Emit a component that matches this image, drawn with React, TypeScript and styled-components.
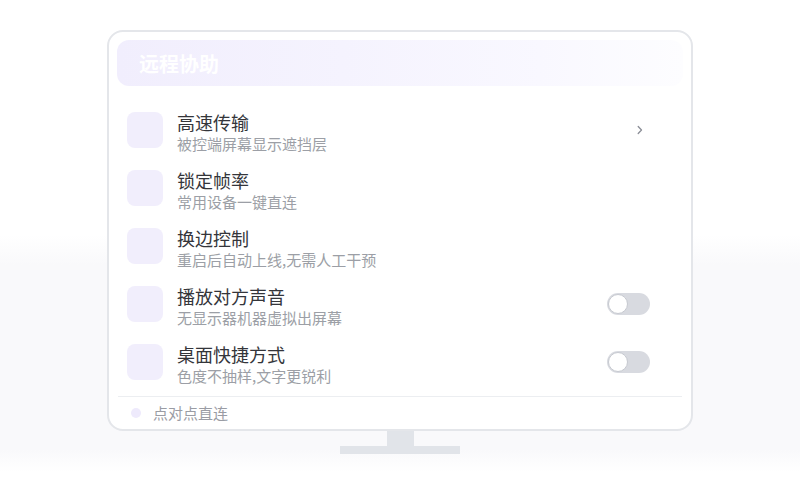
import React from "react";
import styled, { createGlobalStyle } from "styled-components";

const Global = createGlobalStyle`
  html, body { margin: 0; padding: 0; }
  body {
    width: 800px;
    height: 500px;
    overflow: hidden;
    font-family: "Noto Sans CJK SC", "Noto Sans", sans-serif;
    background: linear-gradient(to bottom, #ffffff 0px, #ffffff 235px, #f9f9fb 265px, #f9f9fb 450px, #ffffff 472px);
  }
`;

const Page = styled.div`
  width: 800px;
  height: 500px;
  display: flex;
  flex-direction: column;
  align-items: center;
  padding-top: 30px;
  box-sizing: border-box;
`;

const Screen = styled.div`
  width: 586px;
  height: 401px;
  box-sizing: border-box;
  border: 2px solid #e4e6ea;
  border-radius: 16px;
  background: #ffffff;
  padding: 8px 8px 0 8px;
  display: flex;
  flex-direction: column;
`;

const Header = styled.div`
  height: 46px;
  border-radius: 12px;
  background: linear-gradient(to right, #f1eefd 0%, #f5f3fe 40%, #f9f8ff 75%, #fdfdff 100%);
  display: flex;
  align-items: center;
  padding-left: 22px;
  font-size: 20px;
  font-weight: 700;
  color: #ffffff;
`;

const List = styled.div`
  display: flex;
  flex-direction: column;
  gap: 15px;
  padding: 25px 33px 10px 10px;
`;

const Row = styled.div`
  display: flex;
  align-items: flex-start;
  gap: 14px;
  height: 43px;
`;

const IconBox = styled.div`
  width: 36px;
  height: 36px;
  margin-top: 1px;
  border-radius: 8px;
  background: #f1eefc;
  flex-shrink: 0;
`;

const Texts = styled.div`
  flex: 1;
  display: flex;
  flex-direction: column;
`;

const Title = styled.div`
  font-size: 18px;
  line-height: 22px;
  color: #34353a;
`;

const Sub = styled.div`
  font-size: 15px;
  line-height: 21px;
  color: #9c9fa6;
`;

const Trailing = styled.div`
  width: 43px;
  height: 36px;
  margin-top: 1px;
  display: flex;
  align-items: center;
  justify-content: flex-end;
`;

const Chevron = styled.svg`
  margin-right: 7px;
`;

const Toggle = styled.div`
  width: 43px;
  height: 22px;
  border-radius: 11px;
  background: #d8dae0;
  position: relative;
`;

const Knob = styled.div`
  position: absolute;
  left: 1px;
  top: 1px;
  width: 20px;
  height: 20px;
  box-sizing: border-box;
  border-radius: 50%;
  background: #ffffff;
  border: 1px solid #c6c9d0;
`;

const Divider = styled.div`
  height: 1px;
  background: #eceef1;
  margin: 0 1px 0 1px;
`;

const Footer = styled.div`
  display: flex;
  align-items: center;
  gap: 12px;
  padding: 6px 0 0 14px;
  height: 20px;
  font-size: 15px;
  line-height: 20px;
  color: #9a9ca4;
`;

const Dot = styled.div`
  width: 10px;
  height: 10px;
  border-radius: 50%;
  background: #eeeafc;
`;

const Neck = styled.div`
  width: 27px;
  height: 15px;
  background: #e1e4e9;
  margin-left: 1px;
`;

const Base = styled.div`
  width: 120px;
  height: 8px;
  background: #e1e4e9;
`;

type Item = { title: string; sub: string; trail?: "chevron" | "toggle" };

const items: Item[] = [
  { title: "高速传输", sub: "被控端屏幕显示遮挡层", trail: "chevron" },
  { title: "锁定帧率", sub: "常用设备一键直连" },
  { title: "换边控制", sub: "重启后自动上线,无需人工干预" },
  { title: "播放对方声音", sub: "无显示器机器虚拟出屏幕", trail: "toggle" },
  { title: "桌面快捷方式", sub: "色度不抽样,文字更锐利", trail: "toggle" },
];

export default function App() {
  return (
    <>
      <Global />
      <Page>
        <Screen>
          <Header>远程协助</Header>
          <List>
            {items.map((it) => (
              <Row key={it.title}>
                <IconBox />
                <Texts>
                  <Title>{it.title}</Title>
                  <Sub>{it.sub}</Sub>
                </Texts>
                <Trailing>
                  {it.trail === "chevron" && (
                    <Chevron width="6" height="10" viewBox="0 0 6 10">
                      <polyline
                        points="1.2,1.5 4.5,5 1.2,8.5"
                        fill="none"
                        stroke="#8b8e97"
                        strokeWidth="1.3"
                        strokeLinecap="round"
                        strokeLinejoin="round"
                      />
                    </Chevron>
                  )}
                  {it.trail === "toggle" && (
                    <Toggle>
                      <Knob />
                    </Toggle>
                  )}
                </Trailing>
              </Row>
            ))}
          </List>
          <Divider />
          <Footer>
            <Dot />
            点对点直连
          </Footer>
        </Screen>
        <Neck />
        <Base />
      </Page>
    </>
  );
}
